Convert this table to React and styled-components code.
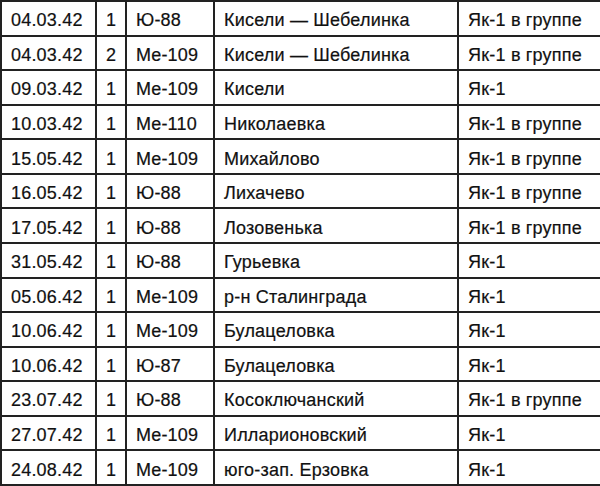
import React from 'react';
import styled, { createGlobalStyle } from 'styled-components';

const rows = [
	['04.03.42', '1', 'Ю-88', 'Кисели — Шебелинка', 'Як-1 в группе'],
	['04.03.42', '2', 'Me-109', 'Кисели — Шебелинка', 'Як-1 в группе'],
	['09.03.42', '1', 'Me-109', 'Кисели', 'Як-1'],
	['10.03.42', '1', 'Me-110', 'Николаевка', 'Як-1 в группе'],
	['15.05.42', '1', 'Me-109', 'Михайлово', 'Як-1 в группе'],
	['16.05.42', '1', 'Ю-88', 'Лихачево', 'Як-1 в группе'],
	['17.05.42', '1', 'Ю-88', 'Лозовенька', 'Як-1 в группе'],
	['31.05.42', '1', 'Ю-88', 'Гурьевка', 'Як-1'],
	['05.06.42', '1', 'Me-109', 'р-н Сталинграда', 'Як-1'],
	['10.06.42', '1', 'Me-109', 'Булацеловка', 'Як-1'],
	['10.06.42', '1', 'Ю-87', 'Булацеловка', 'Як-1'],
	['23.07.42', '1', 'Ю-88', 'Косоключанский', 'Як-1 в группе'],
	['27.07.42', '1', 'Me-109', 'Илларионовский', 'Як-1'],
	['24.08.42', '1', 'Me-109', 'юго-зап. Ерзовка', 'Як-1']
];

const widths = [95, 30, 88, 244, 143];

const GlobalStyle = createGlobalStyle`
	html, body {
		margin: 0;
		padding: 0;
		background: #fff;
	}
`;

const Table = styled.table`
	width: 600px;
	height: 486px;
	border-collapse: collapse;
	table-layout: fixed;
	font-family: 'Liberation Sans', Arial, sans-serif;
	font-size: 18px;
	letter-spacing: 0.2px;
	color: #111;
`;

const Cell = styled.td`
	border: 2px solid #222;
	padding: 5px 0 0 9px;
	white-space: nowrap;
	overflow: hidden;
	vertical-align: middle;
	-webkit-text-stroke: 0.2px #111;
`;

export default function App() {
	return (
		<>
			<GlobalStyle />
			<Table>
				<colgroup>
					{widths.map((w, i) => (
						<col key={i} style={{ width: w }} />
					))}
				</colgroup>
				<tbody>
					{rows.map((row, i) => (
						<tr key={i}>
							{row.map((text, j) => (
								<Cell key={j}>{text}</Cell>
							))}
						</tr>
					))}
				</tbody>
			</Table>
		</>
	);
}
